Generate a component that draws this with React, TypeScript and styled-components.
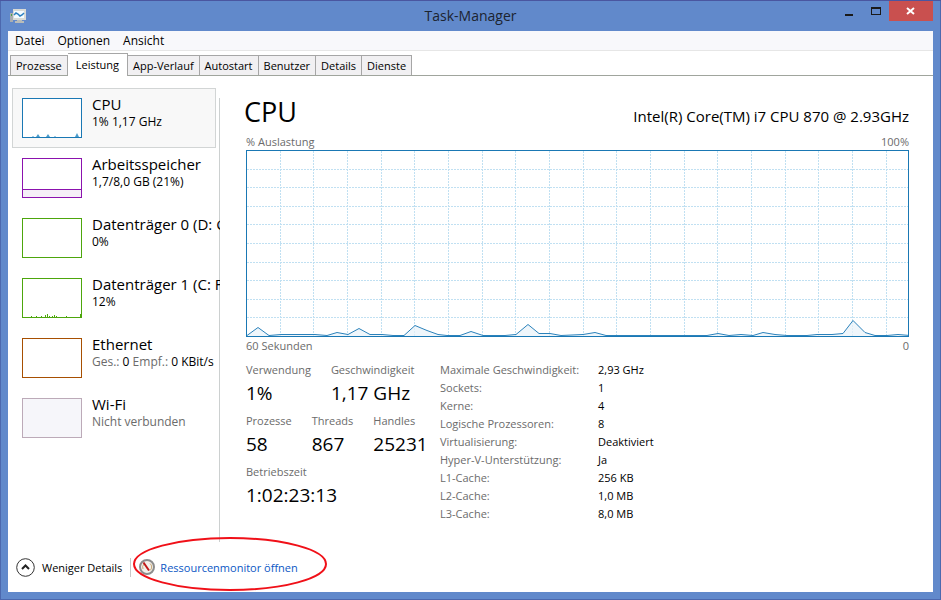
import React from "react";
import styled, { createGlobalStyle } from "styled-components";

const Global = createGlobalStyle`
  *, *::before, *::after { box-sizing: border-box; }
  body { margin: 0; }
  body, button { font-family: "Open Sans", "Noto Sans", sans-serif; font-size: 11px; color: #000; }
  button { background: none; border: 0; padding: 0; margin: 0; text-align: left; }
  h1, h2, p, dl, dt, dd { margin: 0; font-weight: 400; }
`;

const Window = styled.div`
  min-height: 100vh;
  display: flex;
  flex-direction: column;
  padding: 0 8px 8px;
  background: #6189cb;
  border-top: 1px solid #4a56a0;
  box-shadow: inset 1px 0 #4c68ae, inset -1px -1px #4c68ae;
`;

const TitleBar = styled.header`
  height: 30px;
  display: grid;
  grid-template-columns: 1fr auto 1fr;
  flex: none;
`;

const AppIcon = styled.svg`
  margin: 8px 0 0 2px;
`;

const Title = styled.h1`
  font-size: 14px;
  line-height: 30px;
  color: #1c2430;
`;

const WindowButtons = styled.div`
  display: flex;
  justify-content: flex-end;
  align-items: flex-start;
`;

const WindowButton = styled.button<{ $close?: boolean }>`
  display: flex;
  align-items: center;
  justify-content: center;
  width: ${(p) => (p.$close ? 44 : 27)}px;
  height: 20px;
  background: ${(p) => (p.$close ? "#c9504f" : "transparent")};
`;

const Client = styled.div`
  flex: 1;
  display: flex;
  flex-direction: column;
  background: #fff;
`;

const MenuBar = styled.nav`
  display: flex;
  gap: 13px;
  height: 20px;
  padding: 0 7px;
  background: #f8f8fb;
  border-bottom: 1px solid #e6e6e6;
`;

const MenuItem = styled.button`
  font-size: 12px;
  line-height: 20px;
`;

const TabStrip = styled.div`
  display: flex;
  align-items: flex-end;
  height: 25px;
  padding-left: 2px;
  border-bottom: 1px solid #a0a59d;
`;

const Tab = styled.button<{ $active?: boolean }>`
  height: ${(p) => (p.$active ? 23 : 20)}px;
  margin-bottom: ${(p) => (p.$active ? -1 : 0)}px;
  padding: 0 ${(p) => (p.$active ? 8 : 5)}px;
  line-height: 20px;
  background: ${(p) => (p.$active ? "#fff" : "#f1f0f2")};
  border: 1px solid #a6a6a6;
  border-bottom: 0;
  & + & { border-left-width: 0; }
`;

const Body = styled.div`
  flex: 1;
  display: flex;
  padding-top: 12px;
`;

const Sidebar = styled.aside`
  flex: none;
  width: 212px;
  padding-left: 4px;
  overflow: hidden;
  background: linear-gradient(#ccd0d0, #ccd0d0) right 10px / 1px 100% no-repeat;
  background-position: right 10px;
`;

const Resource = styled.button<{ $active?: boolean }>`
  display: flex;
  gap: 10px;
  width: 204px;
  height: 60px;
  padding: 6px 9px;
  border: 1px solid ${(p) => (p.$active ? "#d2d5d5" : "transparent")};
  background: ${(p) => (p.$active ? "#f8f8f8" : "transparent")};
`;

const Thumb = styled.svg<{ $color: string; $idle?: boolean }>`
  flex: none;
  width: 60px;
  height: 40px;
  margin-top: 3px;
  border: 1px solid ${(p) => p.$color};
  background: ${(p) => (p.$idle ? "#f6f6fa" : "#fff")};
`;

const ResourceText = styled.span`
  display: flex;
  flex-direction: column;
  white-space: nowrap;
`;

const ResourceName = styled.span`
  font-size: 15px;
  line-height: 18px;
`;

const ResourceInfo = styled.span`
  font-size: 12px;
  line-height: 17px;
`;

const Muted = styled.span`
  color: #6b6b6b;
`;

const Main = styled.main`
  flex: 1;
  min-width: 0;
  padding: 6px 24px 0 26px;
`;

const Heading = styled.div`
  display: flex;
  justify-content: space-between;
  align-items: baseline;
  height: 40px;
  margin-left: -2px;
`;

const ResourceTitle = styled.h2`
  font-size: 27px;
  line-height: 36px;
`;

const Model = styled.p`
  font-size: 15px;
`;

const Axis = styled.div<{ $below?: boolean }>`
  display: flex;
  justify-content: space-between;
  line-height: ${(p) => (p.$below ? 18 : 16)}px;
  color: #6b6b6b;
`;

const Chart = styled.svg`
  display: block;
  width: 100%;
  height: 187px;
  border: 1px solid #1a78b4;
`;

const Stats = styled.div`
  display: flex;
  align-items: flex-start;
  padding-top: 7px;
`;

const Figures = styled.div`
  width: 194px;
  flex: none;
`;

const FigureRow = styled.dl`
  display: flex;
  gap: 20px;
  height: 51px;
`;

const Figure = styled.div`
  white-space: nowrap;
`;

const Label = styled.dt`
  line-height: 16px;
  color: #6b6b6b;
`;

const BigValue = styled.dd`
  font-size: 19px;
  line-height: 30px;
`;

const Details = styled.dl`
  display: grid;
  grid-template-columns: 158px auto;
  grid-auto-rows: 18px;
  line-height: 16px;
  white-space: nowrap;
`;

const DetailValue = styled.dd``;

const Footer = styled.footer`
  display: flex;
  align-items: center;
  height: 50px;
  padding-left: 8px;
`;

const FooterButton = styled.button`
  display: flex;
  align-items: center;
  gap: 7px;
  padding-right: 8px;
  border-right: 1px solid #c8c8c8;
`;

const MonitorLink = styled.a`
  position: relative;
  display: flex;
  align-items: center;
  gap: 5px;
  margin-left: 8px;
  color: #0b57c4;
  text-decoration: none;
`;

const Highlight = styled.svg`
  position: absolute;
  left: -7px;
  top: -23px;
  pointer-events: none;
`;

const tabs = ["Prozesse", "Leistung", "App-Verlauf", "Autostart", "Benutzer", "Details", "Dienste"];

const load = [
  [0, 1], [11, 9], [22, 1], [34, 2], [68, 2], [80, 1], [90, 4], [101, 2], [112, 8], [123, 2], [135, 2],
  [146, 1], [157, 1], [168, 11], [180, 6], [191, 2], [200, 1], [213, 1], [224, 5], [236, 1], [258, 1],
  [269, 2], [281, 12], [292, 3], [303, 3], [314, 1], [336, 2], [348, 4], [359, 1], [460, 1], [471, 3],
  [482, 1], [494, 2], [506, 1], [516, 4], [528, 2], [540, 1], [560, 1], [570, 2], [585, 2], [596, 3],
  [606, 16], [618, 4], [628, 1], [640, 1], [651, 2], [663, 1],
];
const loadPoints = load.map(([x, y]) => `${x},${185.5 - y}`).join(" ");

const details = [
  ["Maximale Geschwindigkeit:", "2,93 GHz"],
  ["Sockets:", "1"],
  ["Kerne:", "4"],
  ["Logische Prozessoren:", "8"],
  ["Virtualisierung:", "Deaktiviert"],
  ["Hyper-V-Unterstützung:", "Ja"],
  ["L1-Cache:", "256 KB"],
  ["L2-Cache:", "1,0 MB"],
  ["L3-Cache:", "8,0 MB"],
];

const resources = [
  {
    name: "CPU", color: "#1a78b4", info: "1% 1,17 GHz",
    graph: <path d="M9 38l1-1 1 1zM13 38l2-3 2 3zM23 38l2-3 2 3zM31 38l1-1 1 1zM52 38l2-4 2 4z" fill="#4a9ccc" />,
  },
  {
    name: "Arbeitsspeicher", color: "#8b12ae", info: "1,7/8,0 GB (21%)",
    graph: <><rect y="31" width="58" height="7" fill="#f5eff7" /><rect y="30" width="58" height="1" fill="#8b12ae" /></>,
  },
  { name: "Datenträger 0 (D: G:)", color: "#4da60c", info: "0%" },
  {
    name: "Datenträger 1 (C: F:)", color: "#4da60c", info: "12%",
    graph: <path d="M8.500 38v-1M13.500 38v-1M18.500 38v-1M22.500 38v-2M24.500 38v-3M26.500 38v-1M29.500 38v-1M31.500 38v-2M33.500 38v-1M43.500 38v-1M57.500 38v-3" stroke="#4da60c" />,
  },
  {
    name: "Ethernet", color: "#a74f01",
    info: <><Muted>Ges.:</Muted> 0 <Muted>Empf.:</Muted> 0 KBit/s</>,
  },
  { name: "Wi-Fi", color: "#bcaab8", idle: true, info: <Muted>Nicht verbunden</Muted> },
];

const BigFigure = ({ label, value }: { label: string; value: string }) => (
  <Figure>
    <Label>{label}</Label>
    <BigValue>{value}</BigValue>
  </Figure>
);

const LoadChart = () => (
  <Chart viewBox="0 0 661 185" preserveAspectRatio="none" role="img" aria-label="CPU-Auslastung">
    <g stroke="#c0e0f2" strokeDasharray="2 1" shapeRendering="crispEdges">
      {Array.from({ length: 19 }, (_, i) => {
        const x = Math.round((i + 1) * 33.66) - 0.5;
        return <line key={`v${i}`} x1={x} x2={x} y1="0" y2="185" />;
      })}
      {Array.from({ length: 9 }, (_, i) => {
        const y = Math.round((i + 1) * 18.6) - 0.5;
        return <line key={`h${i}`} x1="0" x2="661" y1={y} y2={y} />;
      })}
    </g>
    <polygon points={`0,185 ${loadPoints} 663,185`} fill="#e8f2fa" fillOpacity="0.7" />
    <polyline points={loadPoints} fill="none" stroke="#2b82bb" />
  </Chart>
);

export default function App() {
  return (
    <>
      <Global />
      <Window>
        <TitleBar>
          <AppIcon width="18" height="16" viewBox="0 0 18 16" aria-hidden="true">
            <rect x="0" y="4" width="3" height="9" fill="#a9adb0" />
            <rect x="1" y="5" width="1" height="2" fill="#4aa34a" />
            <rect x="3" y="0" width="13" height="11" fill="#d9dad6" />
            <rect x="4" y="2" width="10" height="7" fill="#f4fbff" />
            <path d="M4 6l2-2 2 1 2 2 2-1 2-2" fill="none" stroke="#2a7fc0" strokeWidth="1.500" />
            <path d="M7 11h5v1h2v2H5v-2h2z" fill="#b9bcb9" />
          </AppIcon>
          <Title>Task-Manager</Title>
          <WindowButtons>
            <WindowButton aria-label="Minimieren">
              <svg width="8" height="18"><rect x="0" y="12" width="8" height="2" fill="#1a1a1a" /></svg>
            </WindowButton>
            <WindowButton aria-label="Maximieren">
              <svg width="10" height="8"><path d="M0 0h10v8H0zM1 2v5h8V2z" fill="#1a1a1a" fillRule="evenodd" /></svg>
            </WindowButton>
            <WindowButton $close aria-label="Schließen">
              <svg width="10" height="8"><path d="M1 1l7 6M8 1l-7 6" stroke="#fff" strokeWidth="2" /></svg>
            </WindowButton>
          </WindowButtons>
        </TitleBar>
        <Client>
          <MenuBar>
            <MenuItem>Datei</MenuItem>
            <MenuItem>Optionen</MenuItem>
            <MenuItem>Ansicht</MenuItem>
          </MenuBar>
          <TabStrip role="tablist">
            {tabs.map((t) => (
              <Tab key={t} role="tab" aria-selected={t === "Leistung"} $active={t === "Leistung"}>{t}</Tab>
            ))}
          </TabStrip>
          <Body>
            <Sidebar>
              {resources.map((r) => (
                <Resource key={r.name} $active={r.name === "CPU"}>
                  <Thumb $color={r.color} $idle={r.idle} viewBox="0 0 58 38" aria-hidden="true">{r.graph}</Thumb>
                  <ResourceText>
                    <ResourceName>{r.name}</ResourceName>
                    <ResourceInfo>{r.info}</ResourceInfo>
                  </ResourceText>
                </Resource>
              ))}
            </Sidebar>
            <Main>
              <Heading>
                <ResourceTitle>CPU</ResourceTitle>
                <Model>Intel(R) Core(TM) i7 CPU 870 @ 2.93GHz</Model>
              </Heading>
              <Axis><span>% Auslastung</span><span>100%</span></Axis>
              <LoadChart />
              <Axis $below><span>60 Sekunden</span><span>0</span></Axis>
              <Stats>
                <Figures>
                  <FigureRow>
                    <BigFigure label="Verwendung" value="1%" />
                    <BigFigure label="Geschwindigkeit" value="1,17 GHz" />
                  </FigureRow>
                  <FigureRow>
                    <BigFigure label="Prozesse" value="58" />
                    <BigFigure label="Threads" value="867" />
                    <BigFigure label="Handles" value="25231" />
                  </FigureRow>
                  <FigureRow>
                    <BigFigure label="Betriebszeit" value="1:02:23:13" />
                  </FigureRow>
                </Figures>
                <Details>
                  {details.map(([k, v]) => (
                    <React.Fragment key={k}>
                      <Label>{k}</Label>
                      <DetailValue>{v}</DetailValue>
                    </React.Fragment>
                  ))}
                </Details>
              </Stats>
            </Main>
          </Body>
          <Footer>
            <FooterButton>
              <svg width="19" height="19" viewBox="0 0 19 19" fill="none" aria-hidden="true">
                <circle cx="9.500" cy="9.500" r="8.800" stroke="#333" />
                <path d="M6 11l3.500-3.500L13 11" stroke="#222" strokeWidth="2" />
              </svg>
              Weniger Details
            </FooterButton>
            <MonitorLink href="#ressourcenmonitor">
              <svg width="16" height="16" viewBox="0 0 16 16" fill="none" aria-hidden="true">
                <circle cx="8" cy="8" r="7" fill="#f4f2ec" stroke="#8d8d8d" strokeWidth="2" />
                <path d="M4 10a4.500 4.500 0 0 1 1-5M11 4.500a4.500 4.500 0 0 1 0 7" stroke="#c9a878" />
                <path d="M4.500 3.500l5.500 8" stroke="#c01818" strokeWidth="2" />
              </svg>
              Ressourcenmonitor öffnen
              <Highlight width="196" height="56" viewBox="0 0 196 56" fill="none" aria-hidden="true">
                <ellipse cx="98" cy="28" rx="96" ry="26" stroke="#f01018" strokeWidth="2" />
              </Highlight>
            </MonitorLink>
          </Footer>
        </Client>
      </Window>
    </>
  );
}
